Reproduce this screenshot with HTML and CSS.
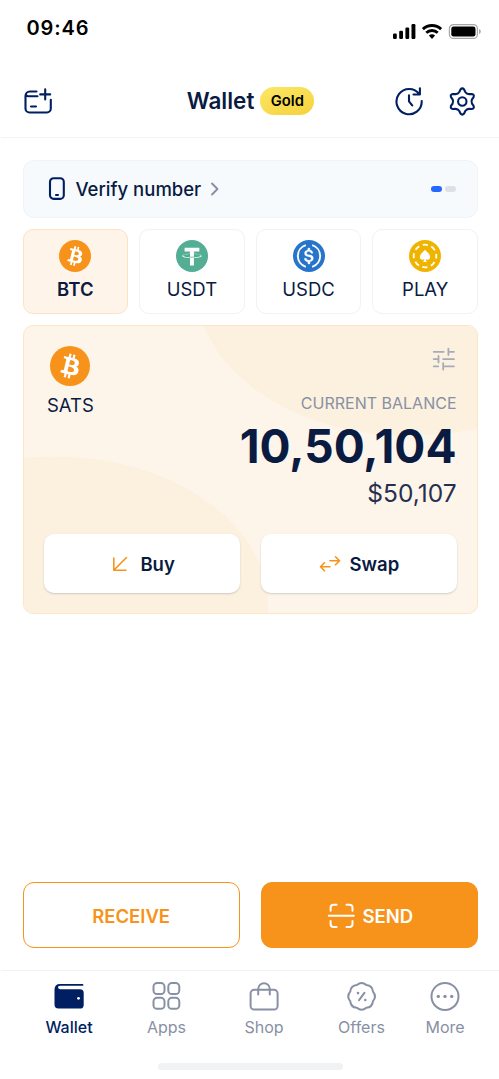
FILE: index.html
```html
<!DOCTYPE html>
<html lang="en">
<head>
<meta charset="utf-8">
<title>Wallet</title>
<link rel="stylesheet" href="styles.css">
</head>
<body>
<svg width="0" height="0" class="defs">
  <defs>
    <symbol id="btc" viewBox="0 0 32 32">
      <circle cx="16" cy="16" r="16" fill="#f7931a"/>
      <path fill="#fff" d="M23.189 14.02c.314-2.096-1.283-3.223-3.465-3.975l.708-2.84-1.728-.43-.69 2.765c-.454-.114-.92-.22-1.385-.326l.695-2.783L15.596 6l-.708 2.839c-.376-.086-.746-.17-1.104-.26l.002-.009-2.384-.595-.46 1.846s1.283.294 1.256.312c.7.175.826.638.805 1.006l-.806 3.235c.048.012.11.03.18.057l-.183-.045-1.13 4.532c-.086.212-.303.531-.793.41.018.025-1.256-.313-1.256-.313l-.858 1.978 2.25.561c.418.105.828.215 1.231.318l-.715 2.872 1.727.43.708-2.84c.472.127.93.245 1.378.357l-.706 2.828 1.728.43.715-2.866c2.948.558 5.164.333 6.097-2.333.752-2.146-.037-3.385-1.588-4.192 1.13-.26 1.98-1.003 2.207-2.538zm-3.95 5.538c-.533 2.147-4.148.986-5.32.695l.95-3.805c1.172.293 4.929.872 4.37 3.11zm.535-5.569c-.487 1.953-3.495.96-4.47.717l.86-3.45c.975.243 4.118.696 3.61 2.733z"/>
    </symbol>
  </defs>
</svg>
<div class="app">
  <div class="status">
    <span class="time">09:46</span>
    <svg class="signals" width="90" height="18" viewBox="0 0 90 18">
      <rect x="1" y="11.5" width="3.8" height="5.5" rx="1.2"/>
      <rect x="7.2" y="8.8" width="3.8" height="8.2" rx="1.2"/>
      <rect x="13.4" y="5.5" width="3.8" height="11.5" rx="1.2"/>
      <rect x="19.5" y="2" width="3.9" height="15" rx="1.2"/>
      <g fill="none" stroke="#000" stroke-width="2.9">
        <path d="M30.900 7.100a13.200 13.200 0 0 1 18.200 0"/>
        <path d="M34.300 10.700a8.300 8.300 0 0 1 11.400 0"/>
      </g>
      <path d="M36.900 13.600a4.600 4.600 0 0 1 6.200 0L40 17z"/>
      <rect x="57.400" y="2.600" width="28" height="13.800" rx="4" fill="none" stroke="#a6a6a6" stroke-width="1.200"/>
      <rect x="59.300" y="4.600" width="24.200" height="9.800" rx="2.200"/>
      <path d="M87 7v5c1.200-.5 1.800-1.400 1.800-2.500S88.200 7.500 87 7z" fill="#aaa"/>
    </svg>
  </div>

  <header class="header">
    <svg class="line-icon" width="30" height="28" viewBox="24.500 87.500 30 28">
      <path d="M37 92H30.500a4.500 4.500 0 0 0-4.500 4.500V109a4 4 0 0 0 4 4h17.300a4 4 0 0 0 4-4v-8.700M38 96.700H29q-2.800 0-2.600-2M31.500 107h5M45.700 89.900v10M40.700 94.900h10"/>
    </svg>
    <div class="heading"><h1 class="title">Wallet</h1><span class="tier">Gold</span></div>
    <div class="header-actions">
      <svg class="line-icon" width="30" height="30" viewBox="394 86.500 30 30">
        <path d="M419.400 94.800A12.600 12.600 0 1 0 421.700 101.600M419.900 88.800v6.200h-6.400M409 95.900v6l3.200 4"/>
      </svg>
      <svg class="line-icon" width="30" height="30" viewBox="-15.300 -15.500 30 30">
        <path d="M-3-9.500L-1.800-12Q0-14.200 1.800-12L3-9.500Q4.300-7.400 6.730-7.350L9.490-7.560Q12.300-7.100 11.290-4.440L9.730-2.150Q8.600 0 9.730 2.150L11.290 4.440Q12.300 7.100 9.490 7.560L6.730 7.350Q4.300 7.400 3 9.500L1.800 12Q0 14.200-1.800 12L-3 9.500Q-4.300 7.400-6.730 7.350L-9.490 7.560Q-12.300 7.100-11.290 4.440L-9.730 2.150Q-8.600 0-9.730-2.150L-11.290-4.440Q-12.300-7.100-9.490-7.560L-6.730-7.350Q-4.300-7.400-3-9.500z"/>
        <circle r="4.200"/>
      </svg>
    </div>
  </header>

  <main class="content">
    <a class="verify">
      <svg class="line-icon" width="18" height="24" viewBox="0 0 18 24"><rect x="2" y="1.300" width="13.800" height="20.600" rx="3.600"/><path d="M8 18h2"/></svg>
      <span class="verify-label">Verify number</span>
      <svg class="chevron" width="10" height="14" viewBox="0 0 10 14"><path d="M2 1.500L7.500 7 2 12.500"/></svg>
      <span class="steps"><i class="step active"></i><i class="step"></i></span>
    </a>

    <div class="coins">
      <div class="coin selected">
        <svg width="32" height="32"><use href="#btc"/></svg>
        <span>BTC</span>
      </div>
      <div class="coin">
        <svg width="32" height="32" viewBox="0 0 32 32"><circle cx="16" cy="16" r="16" fill="#53ae94"/><path fill="#fff" d="M17.922 17.383v-.002c-.11.008-.677.042-1.942.042-1.010 0-1.721-.03-1.971-.042v.003c-3.888-.171-6.790-.848-6.790-1.658 0-.809 2.902-1.486 6.790-1.660v2.644c.254.018.982.061 1.988.061 1.207 0 1.812-.05 1.925-.06v-2.643c3.880.173 6.775.85 6.775 1.658 0 .81-2.895 1.485-6.775 1.657m0-3.590v-2.366h5.414V7.819H8.595v3.608h5.414v2.365c-4.400.202-7.709 1.074-7.709 2.118 0 1.044 3.309 1.915 7.709 2.118v7.582h3.913v-7.584c4.393-.202 7.694-1.073 7.694-2.116 0-1.043-3.301-1.914-7.694-2.117"/></svg>
        <span>USDT</span>
      </div>
      <div class="coin">
        <svg width="32" height="32" viewBox="0 0 32 32"><circle cx="16" cy="16" r="16" fill="#2775ca"/><path fill="none" stroke="#fff" stroke-width="1.900" d="M12.800 5.200a11.300 11.300 0 0 0 0 21.600M19.200 5.200a11.300 11.300 0 0 1 0 21.600"/><path transform="translate(-1.700 -1.600) scale(1.100)" fill="#fff" stroke="#fff" stroke-width=".3" d="M20.022 18.124c0-2.124-1.280-2.852-3.840-3.156-1.828-.243-2.193-.728-2.193-1.578 0-.85.61-1.396 1.828-1.396 1.097 0 1.707.364 2.011 1.275a.458.458 0 0 0 .427.303h.975a.416.416 0 0 0 .427-.425v-.06a3.040 3.040 0 0 0-2.743-2.489V9.142c0-.243-.183-.425-.487-.486h-.915c-.243 0-.426.182-.487.486v1.396c-1.829.242-2.986 1.456-2.986 2.974 0 2.002 1.218 2.791 3.778 3.095 1.707.303 2.255.668 2.255 1.639 0 .97-.853 1.638-2.011 1.638-1.585 0-2.133-.667-2.316-1.578-.06-.242-.244-.364-.427-.364h-1.036a.416.416 0 0 0-.426.425v.06c.243 1.518 1.219 2.610 3.230 2.914v1.457c0 .242.183.425.487.485h.915c.243 0 .426-.182.487-.485V21.340c1.829-.303 3.047-1.578 3.047-3.217z"/></svg>
        <span>USDC</span>
      </div>
      <div class="coin">
        <svg width="32" height="32" viewBox="0 0 32 32"><circle cx="16" cy="16" r="16" fill="#f0b400"/><circle cx="16" cy="16" r="11.300" fill="none" stroke="#fff" stroke-width="1.800" stroke-dasharray="5.200 3.675" stroke-dashoffset="2.600"/><path fill="#fff" d="M16 9.800c1.200 2 5.200 4 5.200 7.200a2.700 2.700 0 0 1-4.500 2q.2 2 1.300 2.900h-4q1.100-.9 1.300-2.900a2.700 2.700 0 0 1-4.500-2c0-3.200 4-5.200 5.200-7.200z"/></svg>
        <span>PLAY</span>
      </div>
    </div>

    <section class="balance">
      <svg class="shapes" width="454" height="288" viewBox="24 326 454 288"><ellipse cx="409.500" cy="287" rx="213" ry="149"/><ellipse cx="55" cy="605.500" rx="213" ry="149"/></svg>
      <div class="balance-top">
        <div class="unit"><svg width="40" height="40"><use href="#btc"/></svg><span>SATS</span></div>
        <div class="figures">
          <svg class="sliders" width="24" height="24" viewBox="433.300 347.200 24 24"><path d="M434 352h10M448.700 348.800v6.400M449 352h5.300M434 359.300h4.700M438.800 356.200v6.400M443.500 359.300h10.800M434 366.500h4.500M443.500 363.300v6.400M443.500 366.500h10.800"/></svg>
          <span class="caption">CURRENT BALANCE</span>
          <strong class="amount">10,50,104</strong>
          <span class="fiat">$50,107</span>
        </div>
      </div>
      <div class="balance-actions">
        <button class="card-btn"><svg width="16" height="16" viewBox="0 0 16 16"><path d="M14.500 1.500L2 14M1.800 2v12.200H14"/></svg><span class="buy-label">Buy</span></button>
        <button class="card-btn"><svg width="22" height="18" viewBox="0 0 22 18"><path d="M11 5.800H20.500M16.500 1.800l4 4-4 4M11 11.800H1.500M5.500 7.800l-4 4 4 4"/></svg><span>Swap</span></button>
      </div>
    </section>
  </main>

  <div class="transfer">
    <button class="btn receive">RECEIVE</button>
    <button class="btn send"><svg width="28" height="28" viewBox="327 901.500 28 28"><path d="M330.600 910.200v-3q0-3 3-3h3M346.500 904.200h3q3 0 3 3v3M330.600 920.500v3q0 3 3 3h3M346.500 926.500h3q3 0 3-3v-3M328.800 915.200h25"/></svg><span>SEND</span></button>
  </div>

  <nav class="tabs">
    <a class="tab current">
      <svg width="30" height="30" viewBox="54 981 30 30"><path fill="#001f62" d="M60 984H82.500q.9 0 .9.900t-.9.900H60q-2 0-2 1.500t2 2H80q3.700 0 3.700 3.700v11.700q0 3.900-3.900 3.900H58.500q-4 0-4-4v-15q0-5.600 5.500-5.600z"/><circle cx="78.500" cy="998.300" r="1.400" fill="#fff"/></svg>
      <span>Wallet</span>
    </a>
    <a class="tab">
      <svg width="30" height="30" viewBox="0.700 0.400 30 30"><rect x="2.200" y="2.500" width="11" height="11" rx="3.600"/><rect x="17" y="2.500" width="11" height="11" rx="3.600"/><rect x="2.200" y="17.200" width="11" height="11" rx="3.600"/><rect x="17" y="17.200" width="11" height="11" rx="3.600"/></svg>
      <span>Apps</span>
    </a>
    <a class="tab">
      <svg width="30" height="30" viewBox="249 981 30 30"><rect x="250.600" y="989.800" width="27" height="19.800" rx="3.600"/><path d="M258.200 994.500V989a5.800 5.800 0 0 1 11.600 0v5.500"/></svg>
      <span>Shop</span>
    </a>
    <a class="tab">
      <svg width="30" height="30" viewBox="-14.600 -15.400 30 30"><path d="M-4.710-11.360Q0-15.400 4.710-11.360Q10.900-10.900 11.360-4.710Q15.400 0 11.360 4.710Q10.900 10.900 4.710 11.360Q0 15.400-4.710 11.360Q-10.900 10.900-11.360 4.710Q-15.400 0-11.360-4.710Q-10.900-10.900-4.710-11.360zM2.800-3.600L-2.500 3.800"/><g class="dots"><circle cx="-3.600" cy="-3.300" r="1.300"/><circle cx="3.700" cy="3.600" r="1.300"/></g></svg>
      <span>Offers</span>
    </a>
    <a class="tab">
      <svg width="30" height="30" viewBox="-15 -15.400 30 30"><circle r="13.500"/><g class="dots"><circle cx="-6.700" r="1.700"/><circle r="1.700"/><circle cx="6.700" r="1.700"/></g></svg>
      <span>More</span>
    </a>
  </nav>
  <div class="home-bar"></div>
</div>
</body>
</html>
```
FILE: styles.css
```css
* { box-sizing: border-box; }
body { margin: 0; background: #fff; font-family: Inter, "Liberation Sans", sans-serif; color: #0a1b42; }
.defs { position: absolute; }
.app { width: 499px; height: 1079px; display: flex; flex-direction: column; overflow: hidden; }
svg { display: block; flex: none; }
button { font: inherit; margin: 0; padding: 0; }

.status { height: 66px; padding: 16px 17.5px 0 26.5px; display: flex; justify-content: space-between; align-items: flex-start; }
.time { font-size: 20px; line-height: 25px; font-weight: 600; letter-spacing: 0.9px; color: #000; }
.signals { margin-top: 6px; }

.header { height: 72px; margin-left: 1px; padding: 0 22px 1px 23px; border-bottom: 1px solid #f4f4f6; display: grid; grid-template-columns: 1fr auto 1fr; align-items: center; }
.line-icon { fill: none; stroke: #001f62; stroke-width: 2.1; stroke-linecap: round; stroke-linejoin: round; }
.heading { display: flex; align-items: center; gap: 6px; }
.title { margin: 0; font-size: 22.5px; line-height: 28px; font-weight: 600; }
.tier { width: 54px; height: 28px; border-radius: 14px; background: linear-gradient(160deg, #fbe766, #f6d23c); color: #000; font-size: 14.8px; line-height: 28px; font-weight: 600; text-align: center; }
.header-actions { display: flex; justify-content: flex-end; gap: 23px; }

.content { flex: 1; padding: 22px 21px 0 22.5px; display: flex; flex-direction: column; gap: 11px; }
.verify { height: 58px; border: 1px solid #f1f3f5; border-radius: 11px; background: #f6fafd; padding: 0 21.5px 0 24px; display: flex; align-items: center; }
.verify-label { margin-left: 10px; font-size: 18.5px; line-height: 24px; font-weight: 500; }
.chevron { margin-left: 8.5px; fill: none; stroke: #858da3; stroke-width: 1.8; stroke-linecap: round; stroke-linejoin: round; }
.steps { margin-left: auto; display: flex; gap: 2.5px; }
.step { width: 11px; height: 6px; border-radius: 3px; background: #dde1e7; }
.step.active { background: #2667ff; }

.coins { display: grid; grid-template-columns: repeat(4, 1fr); gap: 11px; }
.coin { height: 85px; border: 1px solid #f1f2f4; border-radius: 10px; padding-top: 10.4px; display: flex; flex-direction: column; align-items: center; gap: 5px; font-size: 18.5px; line-height: 24px; }
.coin.selected { background: #fef4e9; border-color: #fde3c1; font-weight: 600; }

.balance { position: relative; height: 289px; border: 1px solid #fde5c6; border-radius: 10px; overflow: hidden; background: #fef5ea; padding: 20px; display: flex; flex-direction: column; justify-content: space-between; }
.shapes { position: absolute; left: 0; top: 0; fill: #fcf1df; }
.balance-top { position: relative; display: flex; justify-content: space-between; }
.unit { display: flex; flex-direction: column; align-items: center; gap: 7px; padding-left: 3.5px; font-size: 18.5px; line-height: 24px; }
.figures { display: flex; flex-direction: column; align-items: flex-end; padding-right: 0.5px; }
.sliders { margin: 1px 0 0; fill: none; stroke: #a5abba; stroke-width: 1.8; stroke-linecap: round; overflow: visible; }
.caption { margin-top: 22px; font-size: 16px; line-height: 20px; color: #8890a4; }
.amount { margin-top: 5px; font-size: 46px; line-height: 56px; font-weight: 700; }
.fiat { margin-top: 4px; font-size: 24.5px; line-height: 30px; color: #25304f; }
.balance-actions { position: relative; display: grid; grid-template-columns: 1fr 1fr; gap: 21px; }
.card-btn { height: 59px; border: 0; border-radius: 10px; background: #fff; box-shadow: 0 1px 2px rgba(10, 27, 66, .18); color: #0a1b42; font-size: 18.5px; font-weight: 600; display: flex; align-items: center; justify-content: center; gap: 9px; }
.card-btn svg { fill: none; stroke: #f7931a; stroke-width: 1.6; stroke-linecap: round; stroke-linejoin: round; }
.buy-label { margin-left: 3px; }
.card-btn:first-child { padding-left: 4px; }

.transfer { padding: 0 21px 0 22.5px; display: grid; grid-template-columns: 1fr 1fr; gap: 21px; }
.btn { height: 66px; border: 1.5px solid #f7931a; border-radius: 11px; background: #fff; color: #f7931a; font-size: 18.5px; font-weight: 600; display: flex; align-items: center; justify-content: center; gap: 8px; padding-top: 1px; }
.btn.send { background: #f7931a; color: #fff; padding-left: 1px; }
.send svg { fill: none; stroke: #fff; stroke-width: 2; stroke-linecap: round; }

.tabs { height: 93px; margin: 22px 0 0 1px; padding: 10px 0 0 19.25px; border-top: 1px solid #f1f2f4; display: grid; grid-template-columns: repeat(4, 97.5px) 69.5px; }
.tab { display: flex; flex-direction: column; align-items: center; gap: 6px; font-size: 16px; line-height: 20px; color: #8890a4; }
.tab svg { fill: none; stroke: #8890a4; stroke-width: 2; stroke-linecap: round; stroke-linejoin: round; }
.tab .dots { fill: #8890a4; stroke: none; }
.tab.current { color: #001f62; font-weight: 500; }
.tab.current svg { stroke: none; }
.home-bar { width: 185px; height: 7px; margin: 0 0 9px 158px; border-radius: 3.5px; background: #f1f2f4; }
```
